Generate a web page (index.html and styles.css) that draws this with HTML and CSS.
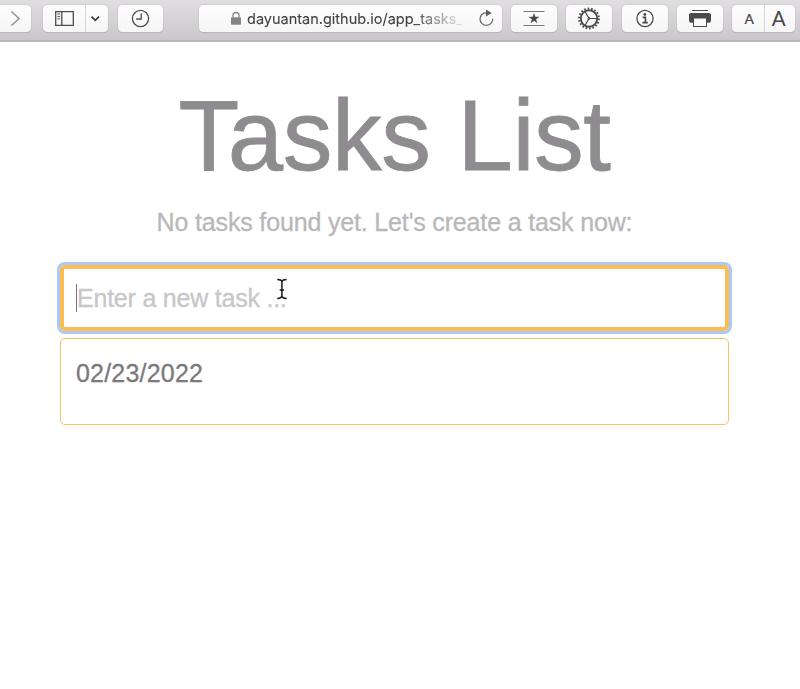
FILE: index.html
```html
<!DOCTYPE html>
<html lang="en">
<head>
<meta charset="utf-8">
<title>Tasks List</title>
<link rel="stylesheet" href="styles.css">
</head>
<body>
<header class="toolbar">
  <div class="btn forward"><svg width="31" height="27" viewBox="0 0 31 27"><path d="M11.5 6.5l7.5 7-7.5 7" fill="none" stroke="#98979a" stroke-width="1.7"/></svg></div>
  <div class="btn sidebar">
    <svg width="42" height="27" viewBox="0 0 42 27" fill="none" stroke="#4d4c50" stroke-width="1.3"><path d="M12.7 6.7h17.6v13.6H12.7zM18.8 7v13"/><path d="M14.4 8.9h2.6M14.4 11.4h2.6M14.4 13.9h2.6" stroke-width="1"/></svg>
    <svg class="split" width="22" height="27" viewBox="0 0 22 27"><path d="M5.8 11.5l3.9 3.9 3.9-3.9" fill="none" stroke="#3e3d40" stroke-width="1.9"/></svg>
  </div>
  <div class="btn clock"><svg width="45" height="27" viewBox="0 0 45 27" fill="none" stroke="#4d4c50" stroke-width="1.3"><circle cx="22.5" cy="13.5" r="8.1"/><path d="M23.2 8.2v5.8h-5"/></svg></div>
  <div class="btn address">
    <svg class="lock" width="12" height="27" viewBox="0 0 12 27"><rect x="1" y="12.2" width="10" height="7.6" rx=".8" fill="#858487"/><path d="M3 12.5v-2a3 3 0 0 1 6 0v2" fill="none" stroke="#858487" stroke-width="1.3"/></svg>
    <span class="url">dayuantan.github.io/app_tasks_</span>
    <svg class="reload" width="18" height="27" viewBox="0 0 18 27"><path d="M14.8 13.8A6.4 6.4 0 1 1 8.4 7.6H11" fill="none" stroke="#69686b" stroke-width="1.3"/><path d="M8 4.6l5.6 3.4L8 11.4z" fill="#5d5c60"/></svg>
  </div>
  <div class="btn star"><svg width="46" height="27" viewBox="0 0 46 27"><path d="M12.5 6.5h21M12.5 20.5h21" stroke="#77767a" stroke-width="1"/><path d="M23 8.7l1.1 3.4h3.6l-2.9 2.1 1.1 3.4L23 15.5l-2.9 2.1 1.1-3.4-2.9-2.1h3.6z" fill="#454447" stroke="#454447" stroke-width=".5"/></svg></div>
  <div class="btn gear"><svg width="46" height="27" viewBox="0 0 46 27" fill="none" stroke="#4b4a4d"><circle cx="23" cy="13.5" r="9.9" stroke-width="2" stroke-dasharray="1.65 1.806"/><circle cx="23" cy="13.5" r="8.2" stroke-width="1.9"/><circle cx="23" cy="13.5" r="1.3" fill="#4b4a4d" stroke="none"/><path d="M23 13.5h7.7M23 13.5l-3.8-6.6M23 13.5l-3.8 6.6" stroke-width="1.2"/></svg></div>
  <div class="btn info"><svg width="46" height="27" viewBox="0 0 46 27" fill="none" stroke="#4b4a4d"><circle cx="23" cy="13.5" r="8.1" stroke-width="1.3"/><circle cx="22.8" cy="9.5" r="1.4" fill="#4b4a4d" stroke="none"/><path d="M20.6 12.3h2.8V17.3M20.4 17.6h5.4" stroke-width="1.7"/></svg></div>
  <div class="btn printer"><svg width="46" height="27" viewBox="0 0 46 27"><path d="M15 5.5h16" stroke="#4b4a4d" stroke-width="1"/><rect x="12" y="8" width="22" height="9.8" rx="2" fill="#4b4a4d"/><rect x="16.5" y="13" width="13" height="8.5" fill="#fbfafb" stroke="#4b4a4d" stroke-width="1"/></svg></div>
  <div class="btn size"><span class="small-a">A</span><span class="large-a split">A</span></div>
</header>
<main class="app">
  <h1>Tasks List</h1>
  <p class="empty">No tasks found yet. Let's create a task now:</p>
  <div class="field task"><span class="placeholder">Enter a new task ...</span></div>
  <div class="field date">02/23/2022</div>
  <svg class="pointer" width="12" height="22" viewBox="0 0 12 22" fill="none" stroke="#19191a" stroke-width="1.5"><path d="M1.2 1.4c2.6 0 4.7.7 4.7 2.7v13.4c0 2-2.1 2.9-4.7 2.9M10.6 1.4c-2.6 0-4.7.7-4.7 2.7M5.9 17.5c0 2 2.1 2.9 4.7 2.9M3.7 12h4.4"/></svg>
</main>
</body>
</html>
```

FILE: styles.css
```css
* { box-sizing: border-box; }
body { margin: 0; height: 689px; overflow: hidden; background: #fff; font-family: "Liberation Sans", Arial, sans-serif; }
svg { display: block; flex: none; }
.toolbar { display: flex; height: 42px; padding-top: 5px; background: linear-gradient(#e0dee0, #c9c7c9); border-bottom: 2px solid #b9b7b9; }
.btn { display: flex; flex: none; height: 27px; border-radius: 4.5px; background: linear-gradient(#fefdfe, #f7f6f7); box-shadow: 0 0 0 .5px #c5c3c5, 0 1px 1px #a9a7a9; }
.forward { width: 31px; border-radius: 0 4.5px 4.5px 0; }
.sidebar { width: 65px; margin-left: 12px; }
.split { border-left: 1px solid #d6d4d6; }
.clock { width: 45px; margin-left: 10px; }
.address { width: 302.5px; margin-left: 36px; padding-left: 31px; }
.url { width: 215px; margin-left: 5px; font: 14.5px/28px Inter, sans-serif; -webkit-text-stroke: .1px; white-space: nowrap; color: #403f42; overflow: hidden; -webkit-mask-image: linear-gradient(90deg, #000 165px, transparent 220px); mask-image: linear-gradient(90deg, #000 165px, transparent 220px); }
.reload { margin-left: 16px; }
.star { width: 46px; margin-left: 9.5px; }
.gear, .info, .printer { width: 46px; margin-left: 9.3px; }
.size { width: 63px; margin-left: 9.3px; color: #454447; text-align: center; font-family: Lato, sans-serif; }
.small-a { width: 32px; font-size: 14px; line-height: 27px; padding-left: 2px; -webkit-text-stroke: .2px; }
.large-a { width: 31px; font-size: 20.5px; line-height: 27px; padding-right: 3px; }
.app { position: relative; width: 669px; margin-left: 60px; }
h1 { height: 158px; margin: 0; padding-top: 35px; font-size: 99.5px; line-height: 118.5px; font-weight: 400; letter-spacing: -.5px; text-align: center; color: #8e8c8f; -webkit-text-stroke: .8px; white-space: nowrap; }
.empty { height: 65px; margin: 0; font-size: 25px; line-height: 45px; letter-spacing: -.16px; text-align: center; color: #b8b7b9; -webkit-text-stroke: .3px; white-space: nowrap; }
.field { border-radius: 5px; padding-left: 15px; font-size: 25px; white-space: nowrap; -webkit-text-stroke: .3px; }
.task { display: flex; align-items: center; height: 66px; padding-left: 12px; border: 4px solid #fdbd55; box-shadow: 0 0 0 3px #a8c9fa; color: #c7c6c8; letter-spacing: -.22px; }
.placeholder { border-left: 1px solid #77767a; line-height: 28px; }
.date { height: 87px; margin-top: 7px; border: 1px solid #f8c067; line-height: 69px; letter-spacing: .2px; color: #7b797c; }
.pointer { position: absolute; left: 216px; top: 235.5px; }
```
